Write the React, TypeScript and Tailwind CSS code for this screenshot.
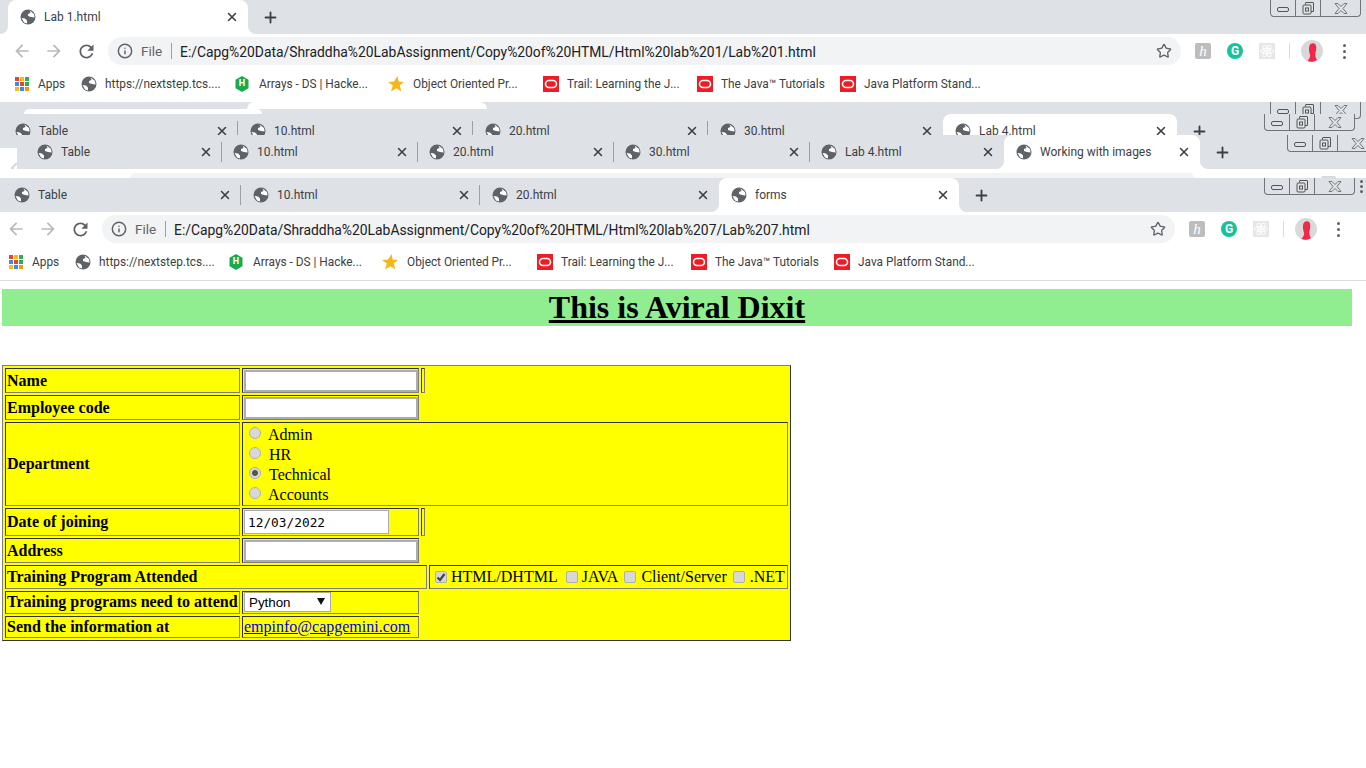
import React from 'react';
import { X, Plus, Star, Info } from 'lucide-react';

const CHROME_FONT = "font-['Roboto','Noto_Sans',sans-serif]";

const Globe = () => (
  <svg viewBox="0 0 16 16" className="w-4 h-4 shrink-0">
    <circle cx="8" cy="8" r="7.5" fill="#5f6368" />
    <path d="M9.500 1.500L14 5l.6 3.500L11 8 8 7V5l2.500-1zM1.500 9L5 9.500l2 2v3l-3-1z" fill="#fff" />
  </svg>
);

const Oracle = () => (
  <svg viewBox="0 0 16 16" className="w-4 h-4 shrink-0">
    <rect width="16" height="16" fill="#ee1c25" />
    <rect x="2.500" y="4.500" width="11" height="7" rx="3.500" fill="none" stroke="#fff" strokeWidth="1.6" />
  </svg>
);

const Hackerrank = () => (
  <div className="relative w-4 h-4 shrink-0">
    <svg viewBox="0 0 16 16" className="w-4 h-4">
      <path d="M8 0l6.500 3.800v8.400L8 16l-6.500-3.800V3.800z" fill="#1ba94c" />
    </svg>
    <span className="absolute inset-0 flex items-center justify-center text-[9px] font-bold text-white">H</span>
  </div>
);

const BookmarkStar = () => (
  <svg viewBox="0 0 16 16" className="w-4 h-4 shrink-0">
    <path d="M9.500 0l1.200 5.400 5.300.6-4.200 3.300 1.500 6.200-4.800-3.200L3 15.500l1.800-6L0 6l6-.6z" fill="#f4b81c" />
  </svg>
);

const AppsGrid = () => {
  const colors = ['#ea4335', '#fbbc05', '#34a853', '#4285f4', '#ea4335', '#34a853', '#fbbc05', '#4285f4', '#f29900'];
  return (
    <div className="grid grid-cols-3 gap-px w-[14px] h-[14px] shrink-0">
      {colors.map((c, i) => (
        <span key={i} className="w-1 h-1" style={{ backgroundColor: c }} />
      ))}
    </div>
  );
};

type TabProps = { title: string; width: string; pad?: string; active?: boolean; sep?: boolean };

const Tab = ({ title, width, pad = 'pl-3', active, sep }: TabProps) => (
  <div className={`relative flex items-center h-full shrink-0 pr-[9px] ${width} ${pad} ${active ? 'bg-white rounded-t-lg' : ''}`}>
    {active && (
      <>
        <span className="absolute bottom-0 -left-2 w-2 h-2 bg-[radial-gradient(circle_at_0_0,#dee1e6_7.5px,#ffffff_8.5px)]" />
        <span className="absolute bottom-0 -right-2 w-2 h-2 bg-[radial-gradient(circle_at_100%_0,#dee1e6_7.5px,#ffffff_8.5px)]" />
      </>
    )}
    <Globe />
    <span className="ml-2 text-xs text-[#3c4043] whitespace-nowrap">{title}</span>
    <X size={14} strokeWidth={2.6} className="ml-auto text-[#3c4043]" />
    {sep && <span className="absolute right-0 top-[7px] w-px h-5 bg-[#9aa0a6]" />}
  </div>
);

const NewTab = () => <Plus size={17} strokeWidth={2.6} className="ml-[14px] text-[#3c4043] shrink-0" />;

const WindowControls = ({ place }: { place: string }) => (
  <div className={`absolute flex w-[91px] h-[17px] bg-[#dee1e6] border border-t-0 border-[#70757a] rounded-b-[4px] ${place}`}>
    <div className="flex items-center justify-center w-[25px] border-r border-[#70757a]">
      <span className="block w-[12px] h-[5px] mt-[3px] border border-[#555] rounded-[2px]" />
    </div>
    <div className="flex items-center justify-center w-[25px] border-r border-[#70757a]">
      <svg viewBox="0 0 12 13" className="w-3 h-[13px]" fill="none" stroke="#555">
        <path d="M3.500 2.500V1a.5.5 0 0 1 .5-.5h7a.5.5 0 0 1 .5.5v8.500H9" />
        <rect x="1" y="3" width="8" height="9" rx="1" />
        <rect x="3.500" y="6" width="3" height="3" />
      </svg>
    </div>
    <div className="flex items-center justify-center flex-1">
      <svg viewBox="0 0 14 11" className="w-[14px] h-[11px]" fill="none" stroke="#777">
        <path d="M1 .5h3l3 3 3-3h3L9 5.500l4 5h-3l-3-3-3 3H1l4-5z" />
      </svg>
    </div>
  </div>
);

const Toolbar = ({ url, pad }: { url: string; pad: string }) => (
  <div className={`flex items-center h-[34px] bg-white ${pad} ${CHROME_FONT}`}>
    <div className="flex items-center justify-center w-8">
      <svg viewBox="0 0 24 24" className="w-5 h-5" fill="#b6b9bd">
        <path d="M20 11H7.830l5.590-5.590L12 4l-8 8 8 8 1.410-1.410L7.830 13H20v-2z" />
      </svg>
    </div>
    <div className="flex items-center justify-center w-8">
      <svg viewBox="0 0 24 24" className="w-5 h-5 rotate-180" fill="#b6b9bd">
        <path d="M20 11H7.830l5.590-5.590L12 4l-8 8 8 8 1.410-1.410L7.830 13H20v-2z" />
      </svg>
    </div>
    <div className="flex items-center justify-center w-8">
      <svg viewBox="0 0 24 24" className="w-[21px] h-[21px]" fill="#5f6368">
        <path d="M17.650 6.350C16.200 4.900 14.210 4 12 4c-4.420 0-7.990 3.580-7.990 8s3.570 8 7.990 8c3.730 0 6.840-2.550 7.730-6h-2.080c-.82 2.330-3.040 4-5.650 4-3.310 0-6-2.690-6-6s2.690-6 6-6c1.660 0 3.140.69 4.220 1.780L13 11h7V4l-2.350 2.350z" />
      </svg>
    </div>
    <div className="flex items-center ml-[6px] w-[1073px] h-7 pl-[9px] pr-[9px] rounded-full bg-[#f1f3f4]">
      <Info size={16} strokeWidth={2.2} className="text-[#5f6368] shrink-0" />
      <span className="ml-2 pt-px text-[13.5px] text-[#5f6368] w-[22px]">File</span>
      <span className="ml-2 w-px h-4 bg-[#9aa0a6]" />
      <span className="ml-2 pt-[2px] text-[13.87px] text-[#202124] whitespace-nowrap">{url}</span>
      <Star size={16} strokeWidth={2} className="ml-auto text-[#5f6368] shrink-0" />
    </div>
    <div className="flex items-center justify-center w-8 ml-[6px]">
      <span className="flex items-center justify-center w-4 h-4 rounded-[2px] bg-[#bdbdbd] text-white text-[15px] italic font-['Liberation_Serif',serif]">h</span>
    </div>
    <div className="flex items-center justify-center w-8">
      <span className="flex items-center justify-center w-4 h-4 rounded-full bg-[#15c39a] text-white text-[12px] font-bold">G</span>
    </div>
    <div className="flex items-center justify-center w-8">
      <span className="flex items-center justify-center w-4 h-4 bg-[#e6e6e6]">
        <svg viewBox="0 0 16 16" className="w-4 h-4" fill="none" stroke="#fff" strokeWidth="0.9">
          <ellipse cx="8" cy="8" rx="6.500" ry="2.600" />
          <ellipse cx="8" cy="8" rx="6.500" ry="2.600" transform="rotate(60 8 8)" />
          <ellipse cx="8" cy="8" rx="6.500" ry="2.600" transform="rotate(120 8 8)" />
          <circle cx="8" cy="8" r="1.200" fill="#fff" />
        </svg>
      </span>
    </div>
    <div className="flex justify-center w-[13px]">
      <span className="w-px h-4 bg-[#dadce0]" />
    </div>
    <div className="flex items-center justify-center w-8">
      <svg viewBox="0 0 22 22" className="w-[22px] h-[22px]">
        <circle cx="11" cy="11" r="11" fill="#d9d9d9" />
        <path d="M6.500 21c1-1.500 2.500-3 2.700-5.500C8 12 7.500 8 8.500 5.500 9.500 3 13 2.500 14.500 4.500c1.300 2 .8 6-.2 9-.4 2 .5 4.500 1.700 6.500-2.800 2-6.500 2.300-9.500 1z" fill="#f0294a" />
      </svg>
    </div>
    <div className="flex flex-col items-center justify-center gap-[3px] w-8">
      <span className="w-[3px] h-[3px] rounded-full bg-[#5f6368]" />
      <span className="w-[3px] h-[3px] rounded-full bg-[#5f6368]" />
      <span className="w-[3px] h-[3px] rounded-full bg-[#5f6368]" />
    </div>
  </div>
);

const Bookmarks = ({ pad }: { pad: string }) => (
  <div className={`flex items-center h-8 bg-white text-[11.85px] text-[#3c4043] whitespace-nowrap ${pad} ${CHROME_FONT}`}>
    <div className="flex items-center w-[66px]"><AppsGrid /><span className="ml-[9px] pt-px">Apps</span></div>
    <div className="flex items-center w-[153px]"><Globe /><span className="ml-2 pt-px">https://nextstep.tcs....</span></div>
    <div className="flex items-center w-[154px]"><Hackerrank /><span className="ml-[9px] pt-px">Arrays - DS | Hacke...</span></div>
    <div className="flex items-center w-[155px]"><BookmarkStar /><span className="ml-[9px] pt-px">Object Oriented Pr...</span></div>
    <div className="flex items-center w-[154px]"><Oracle /><span className="ml-2 pt-px">Trail: Learning the J...</span></div>
    <div className="flex items-center w-[143px]"><Oracle /><span className="ml-2 pt-px">The Java™ Tutorials</span></div>
    <div className="flex items-center"><Oracle /><span className="ml-2 pt-px">Java Platform Stand...</span></div>
  </div>
);

const cell = 'flex items-center border border-t-[#333333] border-l-[#333333] border-b-[#808080] border-r-[#808080]';
const head = `${cell} pl-px font-bold whitespace-nowrap`;
const field = 'w-[174px] h-[22px] ml-px bg-white border-2 border-[#adadad] outline-none';
const radio = 'appearance-none shrink-0 w-3 h-3 rounded-full border border-[#b0b0b0] bg-[#d8d8d8] checked:bg-[radial-gradient(circle,#555555_0,#555555_2.500px,#d8d8d8_3.500px)]';
const check = 'appearance-none shrink-0 w-3 h-3 rounded-[2px] border border-[#b0b0b0] bg-[#d8d8d8]';

const departments = ['Admin', 'HR', 'Technical', 'Accounts'];

export default function App() {
  return (
    <div className="relative w-[1366px] h-[768px] overflow-hidden bg-white">
      {/* first window */}
      <div className={`relative flex items-center h-[34px] pl-2 bg-[#dee1e6] ${CHROME_FONT}`}>
        <Tab title="Lab 1.html" width="w-[240px]" active />
        <NewTab />
        <WindowControls place="left-[1270px] top-0" />
      </div>
      <Toolbar url="E:/Capg%20Data/Shraddha%20LabAssignment/Copy%20of%20HTML/Html%20lab%201/Lab%201.html" pad="pl-[6px]" />
      <Bookmarks pad="pl-[15px]" />
      <div className="h-[2px]" />

      {/* windows stacked behind */}
      <div className={`relative h-[67px] overflow-hidden bg-white ${CHROME_FONT}`}>
        <div className="relative h-[46px] pt-3 bg-[#dee1e6]">
          <span className="absolute left-[247px] top-0 w-[240px] h-[7px] bg-white rounded-t-lg" />
          <span className="absolute left-[24px] top-[7px] w-[238px] h-[5px] bg-white rounded-t-lg" />
          <div className="flex items-center h-[34px] pl-[3px]">
            <Tab title="Table" width="w-[235px]" sep />
            <Tab title="10.html" width="w-[235px]" sep />
            <Tab title="20.html" width="w-[235px]" sep />
            <Tab title="30.html" width="w-[235px]" />
            <Tab title="Lab 4.html" width="w-[234px]" active />
            <NewTab />
          </div>
          <WindowControls place="left-[1270px] top-0" />
          <WindowControls place="left-[1264px] top-3" />
        </div>
        <svg viewBox="0 0 8 12" className="absolute left-[10px] top-[60px] w-2 h-3" fill="none" stroke="#d5d7da" strokeWidth="2">
          <path d="M7 1L2 6l5 5" />
        </svg>
        <div className="relative flex items-center h-[34px] -mt-[13px] ml-[17px] pl-[9px] bg-[#dee1e6]">
          <Tab title="Table" width="w-[196px]" pad="pl-[11px]" sep />
          <Tab title="10.html" width="w-[196px]" pad="pl-[11px]" sep />
          <Tab title="20.html" width="w-[196px]" pad="pl-[11px]" sep />
          <Tab title="30.html" width="w-[196px]" pad="pl-[11px]" sep />
          <Tab title="Lab 4.html" width="w-[194px]" pad="pl-[11px]" />
          <Tab title="Working with images" width="w-[196px]" pad="pl-3" active />
          <NewTab />
          <WindowControls place="left-[1270px] top-0" />
        </div>
      </div>
      <div className="relative h-[9px]">
        <div className="ml-[130px] w-[1064px] h-[5px] translate-y-[4px] rounded-t-2xl bg-[#f1f3f4]" />
        <span className="absolute left-[1321px] top-[7px] w-[15px] h-[2px] rounded-t-full bg-[#d9d9d9]" />
      </div>

      {/* current window */}
      <div className={`relative flex items-center h-[34px] pl-[2px] bg-[#dee1e6] ${CHROME_FONT}`}>
        <Tab title="Table" width="w-[239px]" sep />
        <Tab title="10.html" width="w-[239px]" sep />
        <Tab title="20.html" width="w-[239px]" />
        <Tab title="forms" width="w-[240px]" active />
        <NewTab />
        <WindowControls place="left-[1264px] top-0" />
        <div className="absolute left-[1360px] top-[2px] flex flex-col gap-[2px]">
          <span className="w-[3px] h-[3px] rounded-full bg-[#5f6368]" />
          <span className="w-[3px] h-[3px] rounded-full bg-[#5f6368]" />
          <span className="w-[3px] h-[3px] rounded-full bg-[#5f6368]" />
        </div>
      </div>
      <Toolbar url="E:/Capg%20Data/Shraddha%20LabAssignment/Copy%20of%20HTML/Html%20lab%207/Lab%207.html" pad="pl-0" />
      <Bookmarks pad="pl-[9px]" />
      <div className="h-[2px]" />

      {/* page */}
      <div className="border-t border-[#dadce0] pt-2 font-['Liberation_Serif',serif] text-base text-black">
        <h1 className="ml-[2px] w-[1350px] h-[37px] bg-[#90ee90] text-center text-[32px] leading-[37px] font-bold underline">
          This is Aviral Dixit
        </h1>

        <div className="mt-[39px] ml-[2px] w-[789px] h-[276px] grid grid-cols-[235px_177px_4px_0px_359px] grid-rows-[25px_25px_84px_28px_25px_24px_23px_22px] gap-[2px] p-[2px] bg-[#ffff00] border border-t-[#808080] border-l-[#808080] border-b-[#333333] border-r-[#333333]">
          <div className={head}>Name</div>
          <div className={cell}><input className={field} /></div>
          <div className={cell} />
          <div className="col-span-2" />

          <div className={head}>Employee code</div>
          <div className={cell}><input className={field} /></div>
          <div className="col-span-3" />

          <div className={head}>Department</div>
          <div className={`${cell} col-span-4 flex-col !items-start justify-center pt-[2px] leading-5`}>
            {departments.map((d) => (
              <label key={d} className="flex items-center h-5 pl-[6px]">
                <input type="radio" name="department" defaultChecked={d === 'Technical'} className={`${radio} -mt-1`} />
                <span className={d === 'HR' || d === 'Technical' ? 'ml-2' : 'ml-[7px]'}>{d}</span>
              </label>
            ))}
          </div>

          <div className={head}>Date of joining</div>
          <div className={cell}>
            <input
              readOnly
              value="12/03/2022"
              className="w-[145px] h-6 ml-px pl-[3px] bg-white border border-[#a9a9b8] outline-none text-[12.8px] text-black font-['DejaVu_Sans_Mono',monospace]"
            />
          </div>
          <div className={cell} />
          <div className="col-span-2" />

          <div className={head}>Address</div>
          <div className={cell}><input className={field} /></div>
          <div className="col-span-3" />

          <div className={`${head} col-span-4`}>Training Program Attended</div>
          <div className={`${cell} pl-[5px] whitespace-nowrap`}>
            <span className="relative flex">
              <input type="checkbox" defaultChecked className={check} />
              <svg viewBox="0 0 12 12" className="absolute inset-0 w-3 h-3" fill="none" stroke="#444" strokeWidth="2.200">
                <path d="M2.500 6.500l2.500 2.500 4.500-6" />
              </svg>
            </span>
            <span className="ml-1">HTML/DHTML</span>
            <input type="checkbox" className={`${check} ml-2`} />
            <span className="ml-1">JAVA</span>
            <input type="checkbox" className={`${check} ml-[6px]`} />
            <span className="ml-[5px]">Client/Server</span>
            <input type="checkbox" className={`${check} ml-[6px]`} />
            <span className="ml-[5px]">.NET</span>
          </div>

          <div className={`${head} pb-px`}>Training programs need to attend</div>
          <div className={`${cell} pb-px`}>
            <div className="relative ml-px">
              <select className="appearance-none block w-[87px] h-5 pl-1 bg-white border border-[#a9a9a9] rounded-none outline-none text-[13.33px] font-['Liberation_Sans',sans-serif]">
                <option>Python</option>
              </select>
              <svg viewBox="0 0 8 7" className="absolute left-[73px] top-[6px] w-2 h-[7px]" fill="#111">
                <path d="M0 0h8L4 7z" />
              </svg>
            </div>
          </div>
          <div className="col-span-3" />

          <div className={head}>Send the information at</div>
          <div className={`${cell} pl-px`}>
            <a href="#" className="text-[#0000ee] underline">empinfo@capgemini.com</a>
          </div>
          <div className="col-span-3" />
        </div>
      </div>
    </div>
  );
}
